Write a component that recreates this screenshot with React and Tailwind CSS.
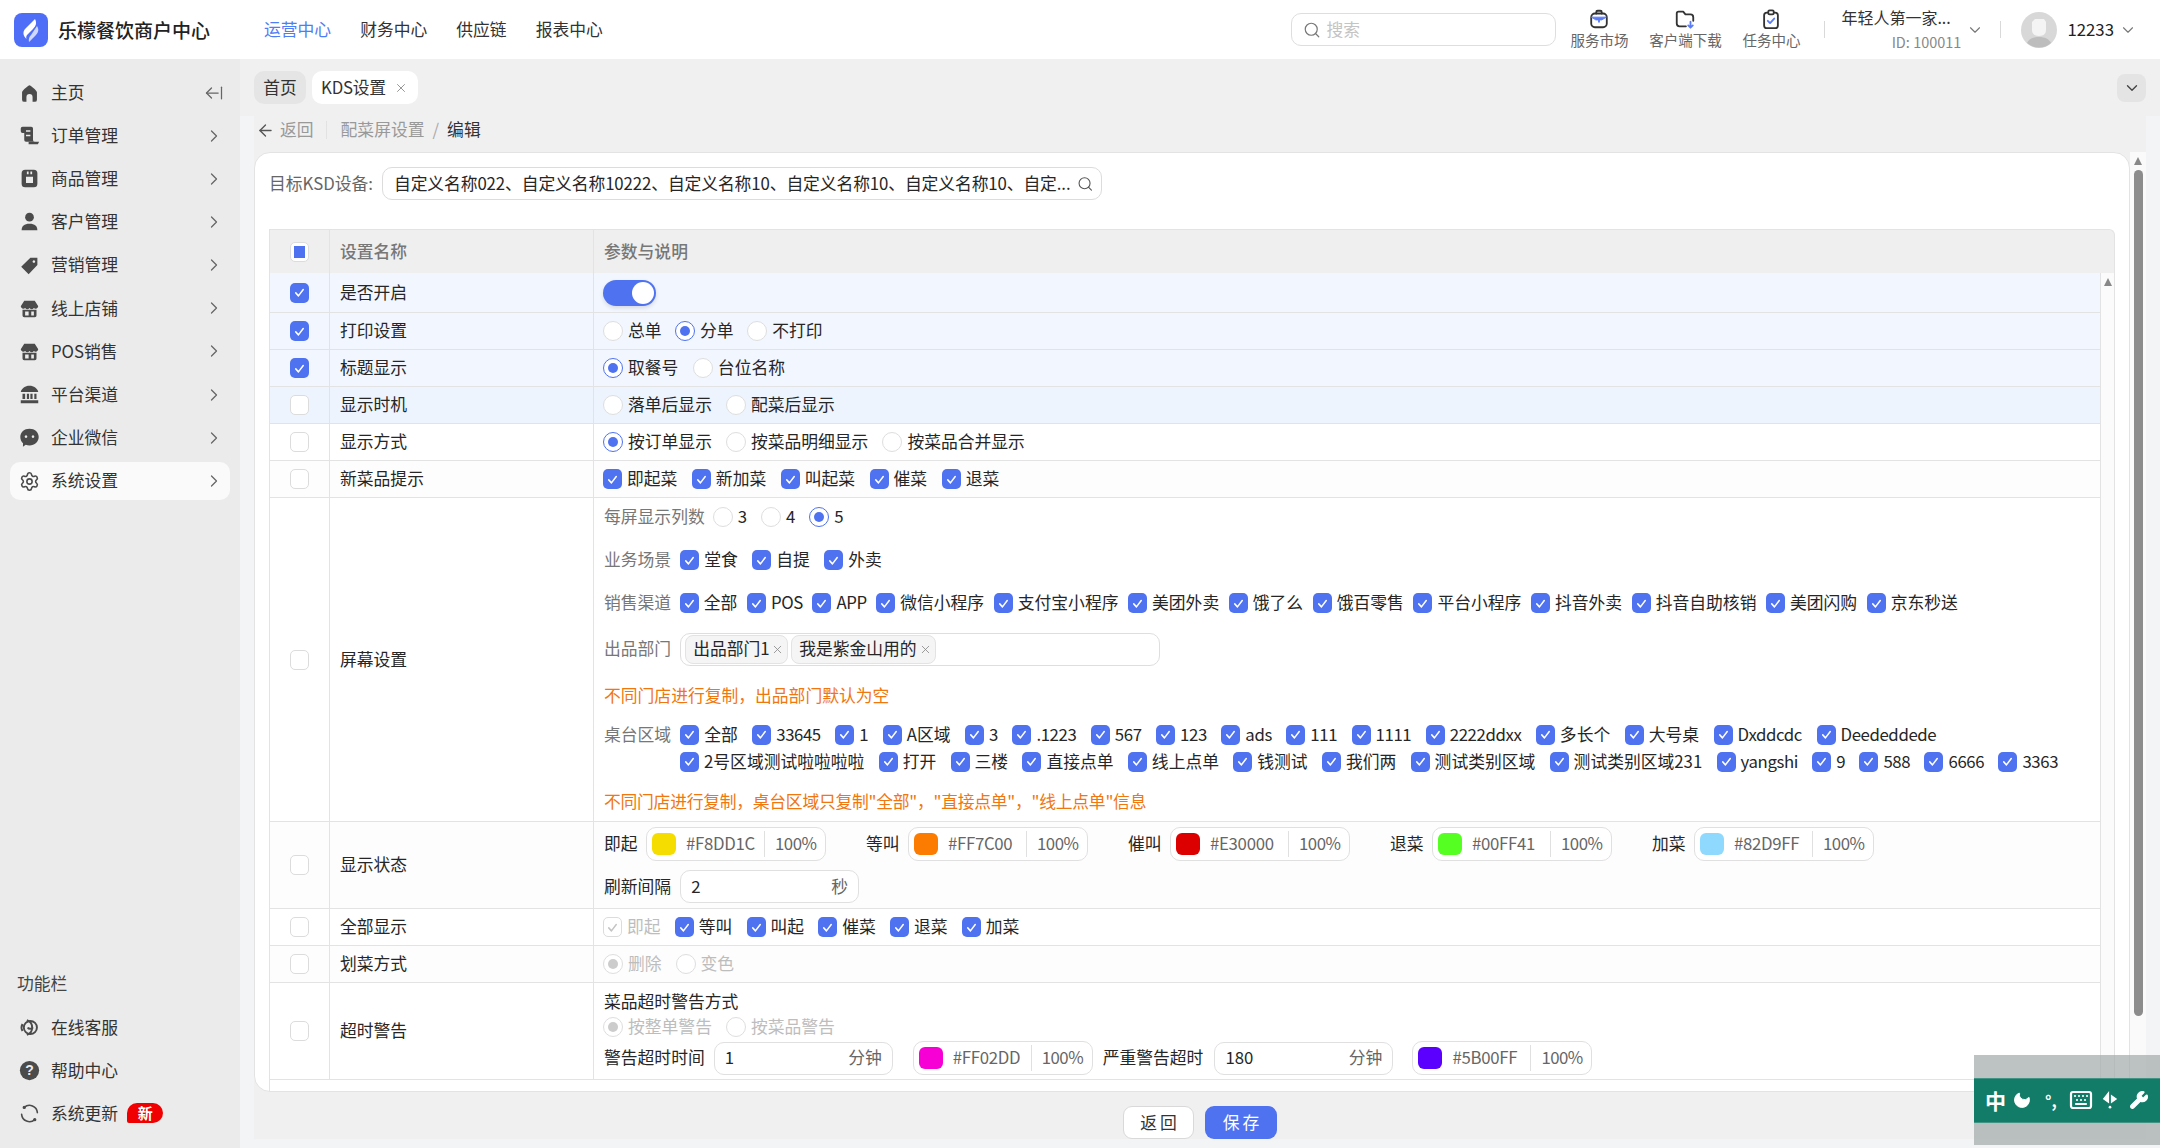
import React from "react";
import { ChevronRight, ChevronDown, ArrowLeftFromLine, ArrowLeft, Search, X, Settings, Keyboard, Moon, Wrench } from "lucide-react";

const Tick = ({ color = "#fff" }) => (
  <svg viewBox="0 0 20 20" className="w-[15px] h-[15px]" fill="none" stroke={color} strokeWidth="2" strokeLinecap="round" strokeLinejoin="round">
    <path d="M5 10.5l3.6 4L15 6" />
  </svg>
);

const Box = ({ on, off, half }) => {
  if (half)
    return (
      <span className="w-[19px] h-[20px] shrink-0 rounded-[5px] border border-[#dcdcdc] bg-white flex items-center justify-center">
        <span className="w-[11px] h-[12px] bg-[#4f72f0]" />
      </span>
    );
  if (off)
    return (
      <span className="w-[19px] h-[20px] shrink-0 rounded-[5px] border border-[#dcdcdc] bg-white flex items-center justify-center">
        <Tick color="#c4c4c4" />
      </span>
    );
  if (on)
    return (
      <span className="w-[19px] h-[20px] shrink-0 rounded-[5px] bg-[#4f72f0] flex items-center justify-center">
        <Tick />
      </span>
    );
  return <span className="w-[19px] h-[20px] shrink-0 rounded-[5px] border border-[#dcdcdc] bg-white" />;
};

const isLatin = (t) => /^[\x00-\x7f]+$/.test(t);

const Ck = ({ t, off }) => (
  <label className={`flex items-center gap-[5px] whitespace-nowrap ${off ? "text-[#bdbdbd]" : ""}`}>
    <Box on={!off} off={off} />
    <span className={isLatin(t) ? "tracking-[-0.4px]" : ""}>{t}</span>
  </label>
);

const Rd = ({ t, on, off }) => (
  <label className={`flex items-center gap-[5px] whitespace-nowrap ${off ? "text-[#bdbdbd]" : ""}`}>
    <span
      className={`w-[20px] h-[20px] shrink-0 rounded-full border bg-white flex items-center justify-center ${
        on && !off ? "border-[#4f72f0]" : "border-[#dedede]"
      }`}
    >
      {on && <span className={`w-[10px] h-[10px] rounded-full ${off ? "bg-[#cccccc]" : "bg-[#4f72f0]"}`} />}
    </span>
    <span>{t}</span>
  </label>
);

const Swatch = ({ c, hex, cls = "" }) => (
  <div className={`w-[180px] h-[34px] shrink-0 flex items-center border border-[#e0e0e0] rounded-[10px] bg-white text-[#666] ${cls}`}>
    <span className="w-[24px] h-[22px] ml-[5px] rounded-[6px]" style={{ background: c }} />
    <span className="ml-[10px] w-[78px] whitespace-nowrap tracking-[-0.3px]">{hex}</span>
    <span className="w-px h-[26px] bg-[#e0e0e0]" />
    <span className="ml-[10px] tracking-[-0.5px]">100%</span>
  </div>
);

const Num = ({ v, u, w = "w-[179px]" }) => (
  <div className={`${w} h-[33px] shrink-0 flex items-center justify-between px-[10px] border border-[#e0e0e0] rounded-[10px] bg-white`}>
    <span>{v}</span>
    <span className="text-[#666]">{u}</span>
  </div>
);

const Row = ({ name, h, box, bg = "bg-white", children, cls = "" }) => (
  <div className={`flex border-b border-[#e3e3e3] ${bg}`} style={{ height: h }}>
    <div className="w-[59px] shrink-0 flex items-center justify-center">
      <Box on={box} />
    </div>
    <div className="w-[264px] shrink-0 flex items-center pl-[10px] border-l border-[#e3e3e3]">{name}</div>
    <div className={`flex-1 pl-[9px] border-l border-[#e3e3e3] ${cls}`}>{children}</div>
  </div>
);

const I = ({ children, cls = "w-[21px] h-[21px]" }) => (
  <svg viewBox="0 0 24 24" className={`${cls} shrink-0`} fill="#4b4b4b">
    {children}
  </svg>
);

const store = (
  <I>
    <path d="M6 3h12l4 6.5a3 3 0 0 1-5 2 3.4 3.4 0 0 1-5 0 3.4 3.4 0 0 1-5 0 3 3 0 0 1-5-2z" />
    <path fillRule="evenodd" d="M4 13.5h16V20a2 2 0 0 1-2 2H6a2 2 0 0 1-2-2zM7 15.5V20h4v-4.5zM14 15.5V20h3v-4.5z" />
  </I>
);

const menu = [
  ["订单管理", <I key="a"><path d="M2 4a2 2 0 0 1 2-2h10a2 2 0 0 1 2 2v13a2 2 0 0 0 2 2H8a2 2 0 0 1-2-2V9H4a2 2 0 0 1-2-2z" /><path fill="#ebebeb" d="M8 6h5v1.8H8zM8 11h5v1.8H8z" /><path d="M11 19h12l-1.5 3H11z" /></I>],
  ["商品管理", <I key="b"><path fillRule="evenodd" d="M7 2h10a4 4 0 0 1 4 4v12a4 4 0 0 1-4 4H7a4 4 0 0 1-4-4V6a4 4 0 0 1 4-4zM8 10v7h8v-7zM9 4v3h2V4zM13 4v3h2V4z" /></I>],
  ["客户管理", <I key="c"><circle cx="12" cy="7" r="5" /><path d="M3 22c0-5 3-7.5 9-7.5s9 2.500 9 7.500z" /></I>],
  ["营销管理", <I key="d"><path fillRule="evenodd" d="M21 3v8.500L11 22 2.500 13.500 13 3zM17 6a1.500 1.500 0 1 0 .01 0z" /></I>],
  ["线上店铺", store],
  ["POS销售", store],
  ["平台渠道", <I key="e"><path d="M12 2c5 0 9 3 10 7H2c1-4 5-7 10-7z" /><path d="M4 11h3v6H4zM9 11h2.500v6H9zM13 11h2.500v6H13zM17.500 11H20v6h-2.500zM2 18.500h20V22H2z" /></I>],
  ["企业微信", <I key="f"><path fillRule="evenodd" d="M12 2c6 0 10.500 4 10.500 9.500S18 21 12 21c-1.500 0-3-.3-4.300-.8L4.500 22.500 4.600 18.500C2.600 16.800 1.500 14.300 1.500 11.500 1.500 6 6 2 12 2zM8 9.500a1.500 1.500 0 1 0 .01 0zM16 9.500a1.500 1.500 0 1 0 .01 0z" /></I>],
  ["系统设置", <Settings key="g" className="w-[21px] h-[21px] shrink-0 text-[#4b4b4b]" strokeWidth={1.8} />],
];

const NavItem = ({ icon, t, active }) => (
  <div className={`h-[38px] mx-[10px] pl-[9px] pr-[6px] flex items-center rounded-[10px] ${active ? "bg-[#fafafa]" : ""}`}>
    <span className="w-[21px] flex justify-center">{icon}</span>
    <span className="ml-[11px] flex-1 text-[#333]">{t}</span>
    <ChevronRight className="w-[20px] h-[20px] text-[#666]" strokeWidth={1.5} />
  </div>
);

const Tool = ({ t, children }) => (
  <div className="flex flex-col items-center mb-[3px] text-[14.5px] leading-[17px] text-[#666] w-[86px]">
    <svg viewBox="0 0 24 24" className="w-[22px] h-[22px] mb-[1.500px]" fill="none" strokeWidth="2" strokeLinejoin="round" strokeLinecap="round">
      {children}
    </svg>
    <span className="whitespace-nowrap">{t}</span>
  </div>
);

const channels = ["全部", "POS", "APP", "微信小程序", "支付宝小程序", "美团外卖", "饿了么", "饿百零售", "平台小程序", "抖音外卖", "抖音自助核销", "美团闪购", "京东秒送"];
const areaA = ["全部", "33645", "1", "A区域", "3", ".1223", "567", "123", "ads", "111", "1111", "2222ddxx", "多长个", "大号桌", "Dxddcdc", "Deededdede"];
const areaB = ["2号区域测试啦啦啦啦", "打开", "三楼", "直接点单", "线上点单", "钱测试", "我们两", "测试类别区域", "测试类别区域231", "yangshi", "9", "588", "6666", "3363"];
const states = [
  ["即起", "#F8DD1C"],
  ["等叫", "#FF7C00"],
  ["催叫", "#E30000"],
  ["退菜", "#00FF41"],
  ["加菜", "#82D9FF"],
];
const stateFill = { "#F8DD1C": "#f6dd00", "#FF7C00": "#fb7c00", "#E30000": "#dd0000", "#00FF41": "#55ff22", "#82D9FF": "#8fd9ff" };

export default function App() {
  return (
    <div className="relative w-[2160px] h-[1148px] overflow-hidden flex flex-col bg-[#f0f0f0] text-[16.8px] text-[#262626] font-['Noto_Sans_CJK_SC','Noto_Sans',sans-serif]">
      {/* header */}
      <header className="h-[59px] shrink-0 bg-white flex items-center pr-[23px]">
        <div className="w-[264px] shrink-0 pl-[14px] flex items-center">
          <svg viewBox="0 0 34 34" className="w-[34px] h-[34px]">
            <rect width="34" height="34" rx="8" fill="#4f6ef7" />
            <path d="M21 6c2 4 1 7-2 10l-5 5c-2 2-2 3-1.500 5-3.500-3-4-7-1.500-10z" fill="#fff" />
            <path d="M23 13c2.500 4 1 7-1.500 9.500L15 29c-.5-3 0-5 2-7z" fill="#cfd8ff" />
          </svg>
          <span className="ml-[10px] text-[19px] font-medium text-[#222] whitespace-nowrap pt-[1px]">乐檬餐饮商户中心</span>
        </div>
        <nav className="flex gap-[29px] text-[#333] pt-[1px]">
          <span className="text-[#4f7df5]">运营中心</span>
          <span>财务中心</span>
          <span>供应链</span>
          <span>报表中心</span>
        </nav>
        <div className="ml-auto w-[265px] h-[33px] flex items-center gap-[5px] px-[11px] border border-[#dedede] rounded-[10px] text-[#c4c4c4]">
          <Search className="w-[18px] h-[18px] text-[#777]" strokeWidth={1.6} />
          <span>搜索</span>
        </div>
        <Tool t="服务市场">
          <path d="M9 6V4.500A1.500 1.500 0 0 1 10.500 3h3A1.500 1.500 0 0 1 15 4.500V6" stroke="#333" />
          <rect x="3.500" y="6" width="17" height="15" rx="4" stroke="#333" />
          <path d="M4 10h16l-5 3h-6z" fill="#5b7cf7" stroke="#5b7cf7" strokeWidth="1" />
          <path d="M12 13v2" stroke="#5b7cf7" />
        </Tool>
        <Tool t="客户端下载">
          <path d="M13 20H6a3 3 0 0 1-3-3V6a2 2 0 0 1 2-2h5l2.500 3H18a3 3 0 0 1 3 3v4" stroke="#333" />
          <path d="M18 15v6M15.500 19l2.500 2.500 2.500-2.500" stroke="#5b7cf7" />
        </Tool>
        <Tool t="任务中心">
          <rect x="4.500" y="5" width="15" height="17" rx="3" stroke="#333" />
          <rect x="9" y="2.500" width="6" height="4.500" rx="1.500" fill="#fff" stroke="#333" />
          <path d="M8.500 14l2.500 2.500 4.500-5" stroke="#5b7cf7" />
        </Tool>
        <span className="ml-[10px] w-px h-[17px] bg-[#d9d9d9]" />
        <div className="ml-[16px] w-[120px] flex flex-col text-[16px] leading-[22px]">
          <span className="whitespace-nowrap text-[#333]">年轻人第一家...</span>
          <span className="self-end text-[14.5px] text-[#888] mt-[3px] whitespace-nowrap">ID: 100011</span>
        </div>
        <ChevronDown className="ml-[5px] w-[18px] h-[18px] text-[#777]" strokeWidth={1.5} />
        <span className="ml-[16px] w-px h-[17px] bg-[#d9d9d9]" />
        <svg viewBox="0 0 36 36" className="ml-[20px] w-[36px] h-[36px]">
          <circle cx="18" cy="18" r="18" fill="#d8d8d8" />
          <path d="M11 10l3-3h9l2 3v8c0 3-2 6-7 6s-7-3-7-6z" fill="#f4f4f4" />
          <path d="M6 31c2-4 6-6 12-6s10 2 12 6a18 18 0 0 1-24 0z" fill="#bdbdbd" />
        </svg>
        <span className="ml-[10px] text-[#222]">12233</span>
        <ChevronDown className="ml-[5px] w-[18px] h-[18px] text-[#777]" strokeWidth={1.5} />
      </header>

      <div className="flex-1 flex min-h-0">
        {/* sidebar */}
        <aside className="w-[240px] shrink-0 bg-[#ebebeb] flex flex-col pt-[15px] pb-[24px]">
          <div className="h-[38px] mx-[10px] pl-[9px] pr-[6px] flex items-center">
            <span className="w-[21px] flex justify-center">
              <I><path d="M12 2.500c1 0 8 5.500 8.500 8V19a2.500 2.500 0 0 1-2.500 2.500h-2.500V16a3.500 3.500 0 0 0-7 0v5.500H6A2.500 2.500 0 0 1 3.500 19v-8.500c.5-2.500 7.500-8 8.500-8z" /></I>
            </span>
            <span className="ml-[11px] flex-1 text-[#333]">主页</span>
            <ArrowLeftFromLine className="w-[20px] h-[20px] text-[#666]" strokeWidth={1.5} />
          </div>
          <div className="flex flex-col gap-[5.200px] mt-[4.500px]">
            {menu.map(([t, ic], i) => (
              <NavItem key={t} t={t} icon={ic} active={i === 8} />
            ))}
          </div>
          <div className="mt-auto">
            <div className="pl-[17px] mb-[20px] text-[#444]">功能栏</div>
            <div className="flex flex-col gap-[21px] pl-[19px] text-[#333] leading-[22px]">
              <div className="flex items-center gap-[11px]">
                <svg viewBox="0 0 24 24" className="w-[21px] h-[21px]" fill="none" stroke="#4b4b4b" strokeWidth="2.200">
                  <path d="M9 3.500a9 9 0 0 1 0 17 M4 8a8 8 0 0 0 0 8" />
                  <circle cx="13" cy="12" r="7.500" />
                  <path d="M10 12c1 2 4.500 2 6 0" />
                </svg>
                <span>在线客服</span>
              </div>
              <div className="flex items-center gap-[11px]">
                <svg viewBox="0 0 24 24" className="w-[21px] h-[21px]">
                  <circle cx="12" cy="12" r="11" fill="#4b4b4b" />
                  <text x="12" y="17.500" textAnchor="middle" fontSize="16" fontWeight="700" fill="#ebebeb" fontFamily="Liberation Sans">?</text>
                </svg>
                <span>帮助中心</span>
              </div>
              <div className="flex items-center gap-[11px]">
                <svg viewBox="0 0 24 24" className="w-[21px] h-[21px]" fill="none" stroke="#4b4b4b" strokeWidth="1.800" strokeLinecap="round">
                  <path d="M3 13a9 9 0 0 0 15 6M21 11A9 9 0 0 0 6 5" />
                  <circle cx="6" cy="5" r="1" fill="#4b4b4b" />
                  <circle cx="18" cy="19" r="1" fill="#4b4b4b" />
                </svg>
                <span>系统更新</span>
                <span className="ml-[-2px] w-[36px] h-[20px] rounded-t-[10px] rounded-bl-[2px] rounded-br-[10px] bg-[#f00000] text-white text-[15px] leading-[20px] text-center font-bold">新</span>
              </div>
            </div>
          </div>
        </aside>

        {/* main */}
        <main className="flex-1 min-w-0 flex flex-col">
          <div className="h-[57px] shrink-0 pl-[14px] pr-[14px] pt-[12px] flex items-start text-[#333]">
            <span className="w-[52px] h-[33px] rounded-[10px] bg-[#e5e5e5] flex items-center justify-center">首页</span>
            <span className="ml-[6px] w-[106px] h-[33px] rounded-[10px] bg-white flex items-center pl-[9px] gap-[8px] whitespace-nowrap">
              <span className="tracking-[-0.2px]">KDS设置</span>
              <X className="w-[14px] h-[14px] text-[#888]" strokeWidth={1.5} />
            </span>
            <span className="ml-auto mt-[3px] w-[29px] h-[28px] rounded-[8px] bg-[#e4e4e4] flex items-center justify-center">
              <ChevronDown className="w-[18px] h-[18px] text-[#444]" strokeWidth={1.8} />
            </span>
          </div>

          <div className="flex-1 min-h-0 bg-[#f3f4f6] px-[14px] pb-[9px]">
            <div className="h-full bg-[#f0f0f0] flex flex-col">
              <div className="h-[36px] shrink-0 pb-[8px] flex items-center text-[#999] whitespace-nowrap">
                <ArrowLeft className="ml-[2px] w-[19px] h-[19px] text-[#555]" strokeWidth={1.7} />
                <span className="ml-[5px]">返回</span>
                <span className="ml-[12px] w-px h-[18px] bg-[#e2e2e2]" />
                <span className="ml-[14px]">配菜屏设置</span>
                <span className="ml-[8px] text-[#aaa]">/</span>
                <span className="ml-[8px] text-[#333]">编辑</span>
              </div>

              <div className="h-[940px] shrink-0 flex">
                {/* card */}
                <section className="w-[1876px] shrink-0 bg-white border border-[#e3e3e3] rounded-t-[16px] rounded-bl-[16px] flex flex-col pl-[14px] pr-[14px]">
                  <div className="h-[76px] shrink-0 flex items-start pt-[14px] whitespace-nowrap">
                    <span className="w-[113px] h-[33px] flex items-center text-[#666]">目标KSD设备:</span>
                    <div className="w-[720px] h-[33px] flex items-center pl-[11px] pr-[8px] gap-[6px] border border-[#dcdcdc] rounded-[10px]">
                      <span className="flex-1 tracking-[-0.1px]">自定义名称022、自定义名称10222、自定义名称10、自定义名称10、自定义名称10、自定...</span>
                      <Search className="w-[18px] h-[18px] text-[#555]" strokeWidth={1.6} />
                    </div>
                  </div>

                  <div className="flex-1 min-h-0 flex flex-col border-l border-[#e3e3e3]">
                    {/* thead */}
                    <div className="h-[44px] shrink-0 flex bg-[#efefef] border-t border-r border-[#e3e3e3] rounded-tr-[6px] text-[#777] font-medium">
                      <div className="w-[59px] flex items-center justify-center">
                        <Box half />
                      </div>
                      <div className="w-[264px] flex items-center pl-[10px] border-l border-[#e3e3e3]">设置名称</div>
                      <div className="flex-1 flex items-center pl-[10px] border-l border-[#e3e3e3]">参数与说明</div>
                    </div>

                    <div className="flex-1 min-h-0 flex">
                      <div className="w-[1831px] shrink-0 border-r border-[#e3e3e3]">
                        <Row name="是否开启" h={40} box bg="bg-[#f2f6fe]" cls="flex items-center">
                          <span className="relative w-[53px] h-[26px] rounded-full bg-[#4f72f0] shadow-[0_2px_4px_rgba(0,0,0,0.12)]">
                            <span className="absolute right-[2px] top-[2px] w-[22px] h-[22px] rounded-full bg-white" />
                          </span>
                        </Row>
                        <Row name="打印设置" h={37} box bg="bg-[#f2f6fe]" cls="flex items-center gap-[13.500px]">
                          <Rd t="总单" />
                          <Rd t="分单" on />
                          <Rd t="不打印" />
                        </Row>
                        <Row name="标题显示" h={37} box bg="bg-[#f2f6fe]" cls="flex items-center gap-[14.500px]">
                          <Rd t="取餐号" on />
                          <Rd t="台位名称" />
                        </Row>
                        <Row name="显示时机" h={37} bg="bg-[#edf4fd]" cls="flex items-center gap-[14px]">
                          <Rd t="落单后显示" />
                          <Rd t="配菜后显示" />
                        </Row>
                        <Row name="显示方式" h={37} cls="flex items-center gap-[14px]">
                          <Rd t="按订单显示" on />
                          <Rd t="按菜品明细显示" />
                          <Rd t="按菜品合并显示" />
                        </Row>
                        <Row name="新菜品提示" h={37} bg="bg-[#fdfdfd]" cls="flex items-center gap-[14.500px]">
                          {["即起菜", "新加菜", "叫起菜", "催菜", "退菜"].map((t) => (
                            <Ck key={t} t={t} />
                          ))}
                        </Row>

                        <Row name="屏幕设置" h={324}>
                          <div className="h-[38px] flex items-center gap-[14px]">
                            <span className="ml-[1px] text-[#777] mr-[-6px]">每屏显示列数</span>
                            <Rd t="3" />
                            <Rd t="4" />
                            <Rd t="5" on />
                          </div>
                          <div className="h-[48px] flex items-center gap-[14.500px]">
                            <span className="ml-[1px] text-[#777] mr-[-5.500px]">业务场景</span>
                            <Ck t="堂食" />
                            <Ck t="自提" />
                            <Ck t="外卖" />
                          </div>
                          <div className="h-[38px] flex items-center gap-[9.600px]">
                            <span className="ml-[1px] text-[#777] mr-[-1px]">销售渠道</span>
                            {channels.map((t) => (
                              <Ck key={t} t={t} />
                            ))}
                          </div>
                          <div className="h-[54px] flex items-center gap-[9px]">
                            <span className="ml-[1px] text-[#777]">出品部门</span>
                            <div className="w-[480px] h-[33px] flex items-center gap-[3px] pl-[4px] border border-[#dedede] rounded-[10px]">
                              {[["出品部门1", "w-[103px]"], ["我是紫金山用的", "w-[145px]"]].map(([t, w]) => (
                                <span key={t} className={`${w} h-[29px] flex items-center justify-between pl-[7px] pr-[3px] bg-[#f5f5f5] border border-[#e3e3e3] rounded-[8px] whitespace-nowrap`}>
                                  {t}
                                  <X className="w-[13px] h-[13px] shrink-0 text-[#888]" strokeWidth={1.5} />
                                </span>
                              ))}
                            </div>
                          </div>
                          <div className="ml-[1px] h-[42px] pb-[2px] flex items-center text-[#f0760e]">不同门店进行复制，出品部门默认为空</div>
                          <div className="mt-[3px] h-[27px] flex items-center gap-[14.500px] whitespace-nowrap">
                            <span className="ml-[1px] text-[#777] mr-[-5.500px]">桌台区域</span>
                            {areaA.map((t) => (
                              <Ck key={t} t={t} />
                            ))}
                          </div>
                          <div className="h-[27px] flex items-center gap-[14.300px] pl-[77px] whitespace-nowrap">
                            {areaB.map((t) => (
                              <Ck key={t} t={t} />
                            ))}
                          </div>
                          <div className="ml-[1px] h-[46px] pt-[8px] flex items-center text-[#f0760e] whitespace-nowrap tracking-[-0.25px]">不同门店进行复制，桌台区域只复制"全部"，"直接点单"，"线上点单"信息</div>
                        </Row>

                        <Row name="显示状态" h={87} bg="bg-[#fdfdfd]">
                          <div className="flex mt-[5px]">
                            {states.map(([n, hex]) => (
                              <div key={n} className="w-[262px] flex items-center gap-[8px]">
                                <span className="ml-[1px] w-[34px] whitespace-nowrap">{n}</span>
                                <Swatch c={stateFill[hex]} hex={hex} />
                              </div>
                            ))}
                          </div>
                          <div className="flex items-center gap-[9px] mt-[9px]">
                            <span className="ml-[1px]">刷新间隔</span>
                            <Num v="2" u="秒" />
                          </div>
                        </Row>

                        <Row name="全部显示" h={37} cls="flex items-center gap-[14.200px]">
                          <Ck t="即起" off />
                          {["等叫", "叫起", "催菜", "退菜", "加菜"].map((t) => (
                            <Ck key={t} t={t} />
                          ))}
                        </Row>
                        <Row name="划菜方式" h={37} bg="bg-[#fdfdfd]" cls="flex items-center gap-[14px]">
                          <Rd t="删除" on off />
                          <Rd t="变色" off />
                        </Row>
                        <Row name="超时警告" h={97}>
                          <div className="ml-[1px] h-[22px] mt-[8px] flex items-center">菜品超时警告方式</div>
                          <div className="h-[26px] mt-[1px] flex items-center gap-[14px]">
                            <Rd t="按整单警告" on off />
                            <Rd t="按菜品警告" off />
                          </div>
                          <div className="flex items-center mt-[1px]">
                            <span className="ml-[1px] whitespace-nowrap">警告超时时间</span>
                            <Num v="1" u="分钟" w="ml-[9px] w-[179px]" />
                            <Swatch c="#f700d6" hex="#FF02DD" cls="ml-[20px]" />
                            <span className="ml-[10px] whitespace-nowrap">严重警告超时</span>
                            <Num v="180" u="分钟" w="ml-[11px] w-[179px]" />
                            <Swatch c="#5b00ff" hex="#5B00FF" cls="ml-[19px]" />
                          </div>
                        </Row>
                      </div>
                      <div className="w-[14px] shrink-0 bg-[#fbfbfb] border-r border-[#e3e3e3] flex justify-center pt-[4px]">
                        <svg viewBox="0 0 10 10" className="w-[10px] h-[10px]"><path d="M5 1l4 8H1z" fill="#888" /></svg>
                      </div>
                    </div>
                  </div>
                </section>

                {/* outer scrollbar */}
                <div className="w-[16px] shrink-0 bg-[#fafafa] flex flex-col items-center pt-[4px]">
                  <svg viewBox="0 0 10 10" className="w-[10px] h-[10px]"><path d="M5 1l4 8H1z" fill="#888" /></svg>
                  <div className="mt-[4px] w-[9px] h-[846px] rounded-full bg-[#8c8c8c]" />
                </div>
              </div>

              <div className="flex-1 flex items-start justify-center gap-[11px] pt-[14px]">
                <button className="w-[71px] h-[33px] pl-[3px] rounded-[9px] bg-white border border-[#d9d9d9] tracking-[3px] text-[#333]">返回</button>
                <button className="w-[72px] h-[33px] pl-[3px] rounded-[9px] bg-[#4f72f0] text-white tracking-[3px]">保存</button>
              </div>
            </div>
          </div>
        </main>
      </div>

      {/* IME toolbar floating over the page */}
      <div className="absolute right-0 top-[1055px] w-[186px] h-[90px] bg-[rgba(160,170,168,0.7)] flex items-center">
        <div className="w-full h-[45px] bg-[#127c68] border-y border-[#3f9483] flex items-center text-white">
          <span className="ml-[11px] w-[22px] text-[21px] font-bold leading-none">中</span>
          <Moon className="ml-[5px] w-[20px] h-[20px] fill-white text-white -rotate-[20deg]" strokeWidth={1} />
          <span className="ml-[13px] w-[20px] text-[16px] leading-none font-bold">°,</span>
          <Keyboard className="ml-[4px] w-[24px] h-[24px] text-white" strokeWidth={2.2} />
          <svg viewBox="0 0 20 24" className="ml-[8px] w-[18px] h-[22px]" fill="#fff">
            <path d="M9 2v14L2 11zM11 6l7 5-7 5z" />
            <circle cx="10" cy="20" r="1.500" />
          </svg>
          <Wrench className="ml-[10px] w-[20px] h-[20px] fill-white text-white" strokeWidth={1.500} />
        </div>
      </div>
    </div>
  );
}
